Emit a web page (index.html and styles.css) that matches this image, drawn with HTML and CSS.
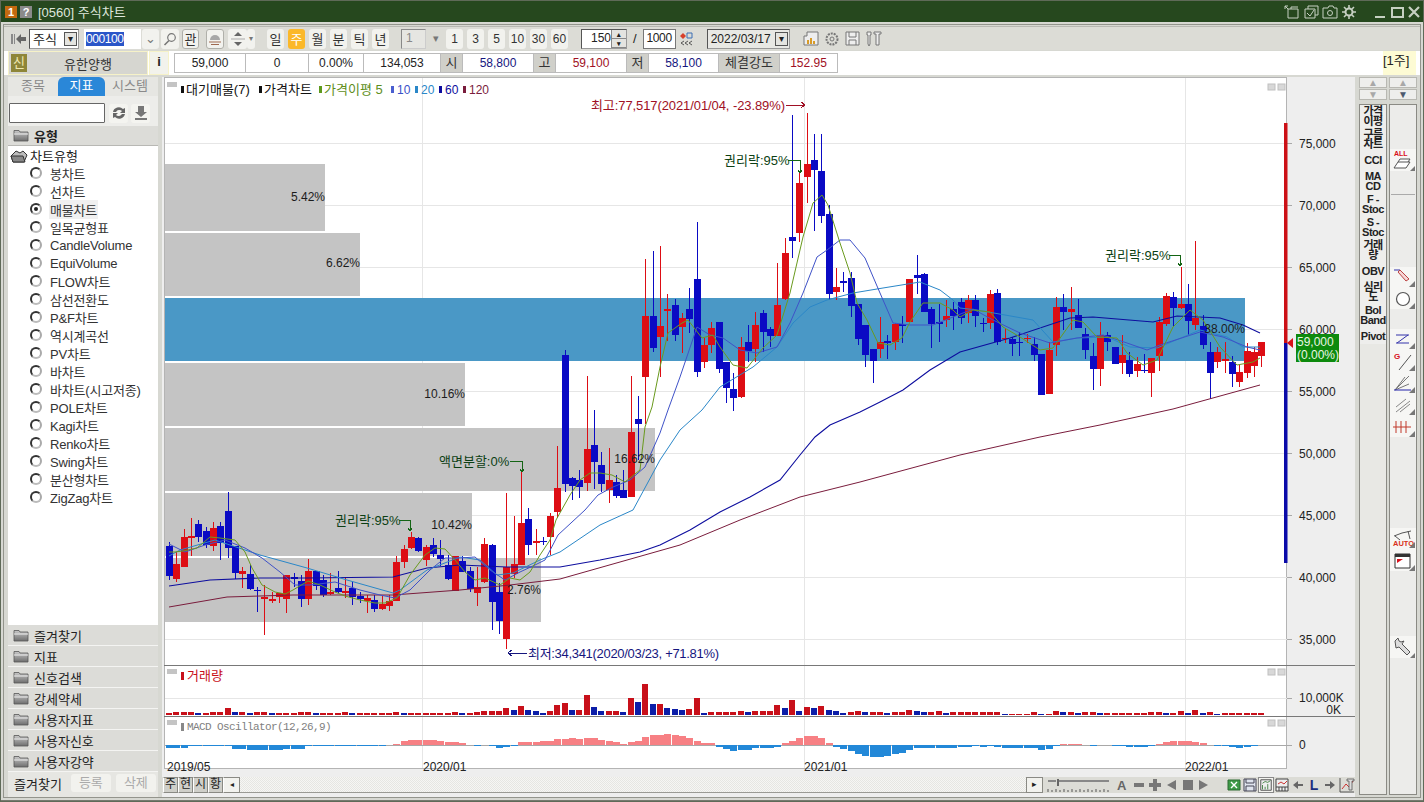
FILE: index.html
```html
<!DOCTYPE html>
<html lang="ko">
<head>
    <meta charset="UTF-8">
    <title>[0560] 주식차트</title>
    <link rel="stylesheet" href="styles.css">
</head>
<body>
    <svg class="defs" width="0" height="0">
        <defs>
            <linearGradient id="folder-grad" x1="0" y1="0" x2="0" y2="1">
                <stop offset="0" stop-color="#c8c8c8"/>
                <stop offset="1" stop-color="#6e6e6e"/>
            </linearGradient>
            <symbol id="folder" viewBox="0 0 16 13">
                <path d="M1 3 L1 1.5 L6 1.5 L7 3 L15 3 L15 12 L1 12 Z" fill="url(#folder-grad)" stroke="#555" stroke-width="0.8"/>
                <path d="M1 5 L15 5" stroke="#eee" stroke-width="1"/>
            </symbol>
            <symbol id="corner" viewBox="0 0 24 20">
                <path d="M24 20v-6l-6 6z" fill="#777"/>
            </symbol>
        </defs>
    </svg>

    <div class="window">
        <header class="titlebar">
            <span class="badge badge-orange">1</span>
            <span class="badge badge-gray">?</span>
            <span class="title-text">[0560] 주식차트</span>
            <div class="title-icons">
                <svg width="16" height="16" viewBox="0 0 16 16"><path d="M4 5h10v9H4zM1 2l3 3M4 2H1v3M7 5V3h7" /></svg>
                <svg width="16" height="16" viewBox="0 0 16 16"><path d="M2 5h10v9H2zM5 5V2h10v9h-3M4 9l3 3 4-6" /></svg>
                <svg width="16" height="16" viewBox="0 0 16 16"><path d="M1 4h5l1-2h4l1 2h3v10H1z" /><circle cx="8" cy="9" r="2.5" /></svg>
                <svg width="16" height="16" viewBox="0 0 16 16"><circle cx="8" cy="8" r="3.5" stroke-width="2" /><path d="M8 1v3M8 12v3M1 8h3M12 8h3M3 3l2 2M11 11l2 2M13 3l-2 2M5 11l-2 2" stroke-width="1.6" /></svg>
                <span class="win-gap"></span>
                <svg width="14" height="16" viewBox="0 0 14 16"><path d="M2 13h10" stroke-width="2" /></svg>
                <svg width="14" height="16" viewBox="0 0 14 16"><path d="M2 4h11v9H2z" stroke-width="2" /></svg>
                <svg width="14" height="16" viewBox="0 0 14 16"><path d="M2 3l10 10M12 3L2 13" stroke-width="2.2" /></svg>
            </div>
        </header>

        <div class="toolbar">
            <svg class="tool-back" width="16" height="14" viewBox="0 0 16 14"><path d="M1 2h2v10H1zM4 2h1v10H4z" fill="#8a8a8a"/><path d="M6 7l5-5v3h5v4h-5v3z" fill="#666"/></svg>
            <div class="select select-market"><span>주식</span><i class="dd-box">▾</i></div>
            <div class="code-input"><span class="selected">000100</span></div>
            <div class="flat-btn dd-small">⌄</div>
            <div class="flat-btn search-btn"><svg width="14" height="14" viewBox="0 0 14 14"><circle cx="8.5" cy="5.5" r="3.8" fill="none" stroke="#777" stroke-width="1.2"/><path d="M6 8.5L1.5 13" stroke="#777" stroke-width="1.6"/></svg></div>
            <div class="flat-btn outlined gwan">관</div>
            <div class="flat-btn outlined bell"><svg width="14" height="14" viewBox="0 0 14 14"><path d="M2 8a5 5 0 0 1 10 0z" fill="#a8a8a8"/><path d="M1 10h12M3 12.5h8" stroke="#a06a50" stroke-width="1.2"/></svg></div>
            <div class="flat-btn spin"><svg width="14" height="16" viewBox="0 0 14 16"><path d="M7 1l4 4H3zM7 15l-4-4h8z" fill="#666"/><path d="M0 8h14" stroke="#aaa"/></svg></div>
            <div class="flat-btn dd-tiny">▾</div>
            <div class="periods">
                <div class="flat-btn">일</div>
                <div class="flat-btn active">주</div>
                <div class="flat-btn">월</div>
                <div class="flat-btn">분</div>
                <div class="flat-btn">틱</div>
                <div class="flat-btn">년</div>
            </div>
            <div class="num-select">1</div>
            <div class="flat-btn dd-num">▾</div>
            <div class="minutes">
                <div class="flat-btn">1</div>
                <div class="flat-btn">3</div>
                <div class="flat-btn">5</div>
                <div class="flat-btn">10</div>
                <div class="flat-btn">30</div>
                <div class="flat-btn">60</div>
            </div>
            <div class="count-input"><span>150</span><i class="spinner"><b>▴</b><b>▾</b></i></div>
            <span class="slash">/</span>
            <div class="total-input">1000</div>
            <svg class="tool-arrows" width="14" height="14" viewBox="0 0 14 14"><path d="M1 4l3-3 3 3-3 3z" fill="#d8402a"/><path d="M8 1h5v5H8z" fill="none" stroke="#3b6fb5"/><path d="M5 9l-3 2 3 2M9 9l-3 2 3 2M13 9l-3 2 3 2" fill="none" stroke="#555"/></svg>
            <div class="date-select"><span>2022/03/17</span><i class="dd-box">▾</i></div>
            <div class="tool-icons">
                <svg width="16" height="16" viewBox="0 0 16 16"><path d="M4 1h11v13H1V5h3z" fill="#eee" stroke="#777"/><path d="M4 13V9h2v4zM7 13V7h2v6zM10 13V10h2v3z" fill="#d89b28"/></svg>
                <svg width="16" height="16" viewBox="0 0 16 16"><circle cx="8" cy="8" r="5.5" fill="none" stroke="#777" stroke-width="2" stroke-dasharray="2 1"/><circle cx="8" cy="8" r="2" fill="none" stroke="#777"/></svg>
                <svg width="16" height="16" viewBox="0 0 16 16"><path d="M1 1h13v13H1z" fill="#eee" stroke="#777"/><path d="M4 1v5h7V1M4 14v-5h7v5" fill="none" stroke="#777"/></svg>
                <svg width="16" height="16" viewBox="0 0 16 16"><path d="M2 1h3v3H4v9l-1 2-1-2V4H1V1zM8 1h7v2h-2v11h-3V3H8z" fill="#eee" stroke="#777"/></svg>
            </div>
        </div>

        <div class="inforow">
            <div class="stock-name">
                <span class="new-badge">신</span>
                <span class="stock-text">유한양행</span>
            </div>
            <div class="info-btn">i</div>
            <div class="quote">
                <div class="cell">59,000</div>
                <div class="cell">0</div>
                <div class="cell">0.00%</div>
                <div class="cell">134,053</div>
                <div class="cell label">시</div>
                <div class="cell navy">58,800</div>
                <div class="cell label">고</div>
                <div class="cell red">59,100</div>
                <div class="cell label">저</div>
                <div class="cell navy">58,100</div>
                <div class="cell label">체결강도</div>
                <div class="cell red">152.95</div>
            </div>
            <div class="unit">[1주]</div>
        </div>

        <div class="main">
            <aside class="sidebar">
                <div class="tabs">
                    <div class="tab">종목</div>
                    <div class="tab active">지표</div>
                    <div class="tab">시스템</div>
                </div>
                <div class="search-row">
                    <div class="search-box"></div>
                    <div class="side-btn"><svg width="16" height="16" viewBox="0 0 16 16"><path d="M2 7a6 6 0 0 1 10-3l2-1v5H9l2-2A4 4 0 0 0 5 7zM14 9a6 6 0 0 1-10 3l-2 1V8h5l-2 2a4 4 0 0 0 6-1z" fill="#666"/></svg></div>
                    <div class="side-btn"><svg width="14" height="16" viewBox="0 0 14 16"><path d="M4 1h6v6h3l-6 5-6-5h3zM1 13h12v2H1z" fill="#777"/></svg></div>
                </div>
                <div class="section open"><svg class="folder-icon" width="16" height="13"><use href="#folder"/></svg><b>유형</b></div>
                <div class="tree">
                    <div class="tree-root">
                        <svg width="18" height="14" viewBox="0 0 18 14"><path d="M1 7l5-5 4 2 3-2 4 4-3 7H3z" fill="#bbb" stroke="#333"/><path d="M1 7h12l2 6H3z" fill="#888" stroke="#333"/></svg>
                        <span>차트유형</span>
                    </div>
                    <ul class="chart-types">
                        <li><i class="radio"></i><span>봉차트</span></li>
                        <li><i class="radio"></i><span>선차트</span></li>
                        <li class="checked"><i class="radio"></i><span>매물차트</span></li>
                        <li><i class="radio"></i><span>일목균형표</span></li>
                        <li><i class="radio"></i><span>CandleVolume</span></li>
                        <li><i class="radio"></i><span>EquiVolume</span></li>
                        <li><i class="radio"></i><span>FLOW차트</span></li>
                        <li><i class="radio"></i><span>삼선전환도</span></li>
                        <li><i class="radio"></i><span>P&amp;F차트</span></li>
                        <li><i class="radio"></i><span>역시계곡선</span></li>
                        <li><i class="radio"></i><span>PV차트</span></li>
                        <li><i class="radio"></i><span>바차트</span></li>
                        <li><i class="radio"></i><span>바차트(시고저종)</span></li>
                        <li><i class="radio"></i><span>POLE차트</span></li>
                        <li><i class="radio"></i><span>Kagi차트</span></li>
                        <li><i class="radio"></i><span>Renko차트</span></li>
                        <li><i class="radio"></i><span>Swing차트</span></li>
                        <li><i class="radio"></i><span>분산형차트</span></li>
                        <li><i class="radio"></i><span>ZigZag차트</span></li>
                    </ul>
                </div>
                <div class="section"><svg class="folder-icon" width="16" height="13"><use href="#folder"/></svg><span>즐겨찾기</span></div>
                <div class="section"><svg class="folder-icon" width="16" height="13"><use href="#folder"/></svg><span>지표</span></div>
                <div class="section"><svg class="folder-icon" width="16" height="13"><use href="#folder"/></svg><span>신호검색</span></div>
                <div class="section"><svg class="folder-icon" width="16" height="13"><use href="#folder"/></svg><span>강세약세</span></div>
                <div class="section"><svg class="folder-icon" width="16" height="13"><use href="#folder"/></svg><span>사용자지표</span></div>
                <div class="section"><svg class="folder-icon" width="16" height="13"><use href="#folder"/></svg><span>사용자신호</span></div>
                <div class="section"><svg class="folder-icon" width="16" height="13"><use href="#folder"/></svg><span>사용자강약</span></div>
                <div class="fav-row">
                    <span class="fav-label">즐겨찾기</span>
                    <div class="fav-btn">등록</div>
                    <div class="fav-btn">삭제</div>
                </div>
            </aside>

            <section class="chart">
                <svg class="plot" width="1193" height="700" viewBox="162 77 1193 700">
                    <rect class="plot-bg" x="164.5" y="77.5" width="1122" height="691"/>

                    <g class="grid">
                        <path d="M165 143H1287M165 205H1287M165 267H1287M165 329H1287M165 391H1287M165 453H1287M165 515H1287M165 577H1287M165 639H1287"/>
                        <path d="M165 698H1287"/>
                        <path d="M422.5 78V768M804.5 78V768M1185.5 78V768"/>
                    </g>

                    <g class="ticks">
                        <path d="M1287 143h5M1287 205h5M1287 267h5M1287 329h5M1287 391h5M1287 453h5M1287 515h5M1287 577h5M1287 639h5M1287 698h5M1287 745h5"/>
                        <path class="zero" d="M165 745.5H1287"/>
                    </g>

                    <g class="profile">
                        <rect x="165" y="164" width="160" height="67"/>
                        <rect x="165" y="233" width="195" height="63"/>
                        <rect class="profile-max" x="165" y="298" width="1080" height="63"/>
                        <rect x="165" y="363" width="300" height="63"/>
                        <rect x="165" y="428" width="490" height="63"/>
                        <rect x="165" y="493" width="307" height="63"/>
                        <rect x="165" y="558" width="376" height="64"/>
                    </g>

                    <g id="candles"></g>
                    <g id="averages"></g>
                    <g id="volume"></g>
                    <g id="macd"></g>

                    <g class="profile-labels">
                        <text x="325" y="201">5.42%</text>
                        <text x="360" y="267">6.62%</text>
                        <text x="1245" y="333">38.00%</text>
                        <text x="465" y="398">10.16%</text>
                        <text x="655" y="463">16.62%</text>
                        <text x="472" y="529">10.42%</text>
                        <text x="541" y="594">2.76%</text>
                    </g>

                    <g class="legend">
                        <rect class="pane-mark" x="167" y="82" width="10" height="5"/>
                        <rect class="pane-mark" x="167" y="669" width="10" height="5"/>
                        <rect class="pane-mark" x="167" y="720" width="10" height="5"/>
                        <rect x="181" y="86" width="3" height="7" fill="#111"/>
                        <text x="186" y="94" fill="#111">대기매물(7)</text>
                        <rect x="259" y="86" width="3" height="7" fill="#111"/>
                        <text x="264" y="94" fill="#111">가격차트</text>
                        <rect x="319" y="86" width="3" height="7" fill="#5e9a1e"/>
                        <text x="324" y="94" fill="#5e8e1a">가격이평 5</text>
                        <rect x="391" y="86" width="3" height="7" fill="#4a5fd0"/>
                        <text class="num" x="397" y="94" fill="#3a50c8">10</text>
                        <rect x="415" y="86" width="3" height="7" fill="#2a87c8"/>
                        <text class="num" x="421" y="94" fill="#2a87c8">20</text>
                        <rect x="439" y="86" width="3" height="7" fill="#0d0d9e"/>
                        <text class="num" x="445" y="94" fill="#0d0d9e">60</text>
                        <rect x="463" y="86" width="3" height="7" fill="#7a1c3c"/>
                        <text class="num" x="469" y="94" fill="#7a1c3c">120</text>
                        <rect x="181" y="672" width="3" height="8" fill="#c8101a"/>
                        <text x="187" y="680" fill="#c8101a">거래량</text>
                        <rect x="181" y="723" width="3" height="8" fill="#888"/>
                        <text class="mono" x="187" y="730" fill="#808080">MACD Oscillator(12,26,9)</text>
                    </g>

                    <g class="notes">
                        <text class="note-red" x="591" y="110" textLength="194">최고:77,517(2021/01/04, -23.89%)</text>
                        <path class="arrow-red" d="M786 105h19M801 102l4 3-4 3"/>
                        <text class="note-navy" x="528" y="658" textLength="191">최저:34,341(2020/03/23, +71.81%)</text>
                        <path class="arrow-navy" d="M508 653h19M512 650l-4 3 4 3"/>
                        <text class="note-green" x="724" y="165">권리락:95%</text>
                        <path class="arrow-green" d="M788 160h12v12M798 170l2 3 2-3"/>
                        <text class="note-green" x="1105" y="260">권리락:95%</text>
                        <path class="arrow-green" d="M1169 255h11v10M1178 263l2 3 2-3"/>
                        <text class="note-green" x="335" y="525">권리락:95%</text>
                        <path class="arrow-green" d="M399 520h11v10M408 528l2 3 2-3"/>
                        <text class="note-green" x="439" y="466">액면분할:0%</text>
                        <path class="arrow-green" d="M510 461h12v10M520 469l2 3 2-3"/>
                    </g>

                    <g class="pane-btns">
                        <rect x="1268" y="84" width="7" height="6"/><rect x="1278" y="84" width="7" height="6"/>
                        <rect x="1268" y="669" width="7" height="6"/><rect x="1278" y="669" width="7" height="6"/>
                        <rect x="1268" y="720" width="7" height="6"/><rect x="1278" y="720" width="7" height="6"/>
                    </g>

                    <rect x="1284" y="123" width="3.5" height="220" fill="#cc1016"/>
                    <rect x="1284" y="343" width="3.5" height="220" fill="#0a0aa8"/>
                    <path d="M1287 343l6-5v10z" fill="#d8101a"/>

                    <path class="pane-line" d="M164 665.5H1355M164 716.5H1355"/>

                    <g class="axis">
                        <text x="1299" y="148">75,000</text>
                        <text x="1299" y="210">70,000</text>
                        <text x="1299" y="272">65,000</text>
                        <text x="1299" y="334">60,000</text>
                        <text x="1299" y="396">55,000</text>
                        <text x="1299" y="458">50,000</text>
                        <text x="1299" y="520">45,000</text>
                        <text x="1299" y="582">40,000</text>
                        <text x="1299" y="644">35,000</text>
                        <text x="1299" y="702">10,000K</text>
                        <text x="1341" y="714" text-anchor="end">0K</text>
                        <text x="1299" y="749">0</text>
                        <text x="167" y="771">2019/05</text>
                        <text x="423" y="771">2020/01</text>
                        <text x="804" y="771">2021/01</text>
                        <text x="1185" y="771">2022/01</text>
                    </g>

                    <rect x="1296" y="334" width="43" height="28" fill="#0d8a0d"/>
                    <text class="price-tag" x="1297" y="346">59,000</text>
                    <text class="price-tag" x="1297" y="359">(0.00%)</text>
                </svg>

                <div class="bottombar">
                    <div class="mini-tabs">
                        <span>주</span><span>현</span><span>시</span><span>황</span><span class="mini-arrow">◂</span>
                    </div>
                    <div class="scroll-track"></div>
                    <div class="scroll-end">▸</div>
                    <svg class="zoom-slider" width="64" height="16" viewBox="0 0 64 16">
                        <path d="M1 4h8M12 4h50" stroke="#888" stroke-width="2"/>
                        <path d="M11 2v7" stroke="#666" stroke-width="2"/>
                        <path d="M1 15V12M5 15V13M9 15V12M13 15V13M17 15V12M21 15V13M25 15V12M29 15V13M33 15V12M37 15V13M41 15V12M45 15V13M49 15V12M53 15V13M57 15V12M61 15V13" stroke="#555"/>
                    </svg>
                    <div class="bar-icons">
                        <span class="bar-a">A</span>
                        <svg width="12" height="14" viewBox="0 0 12 14"><path d="M1 5h10v4H1z" fill="#777"/></svg>
                        <svg width="12" height="14" viewBox="0 0 12 14"><path d="M4 1h4v4h4v4H8v4H4V9H0V5h4z" fill="#777"/></svg>
                        <svg width="12" height="14" viewBox="0 0 12 14"><path d="M11 2v10L2 7z" fill="#777"/></svg>
                        <svg width="12" height="14" viewBox="0 0 12 14"><path d="M2 2h10v10H2z" fill="#777"/></svg>
                        <svg width="12" height="14" viewBox="0 0 12 14"><path d="M2 2v10l9-5z" fill="#777"/></svg>
                    </div>
                    <div class="bar-icons right">
                        <svg width="14" height="14" viewBox="0 0 14 14"><path d="M1 2h12v10H1z" fill="#3d9a46" stroke="#2c6a32"/><path d="M4 4l6 6M10 4l-6 6" stroke="#fff" stroke-width="1.4"/></svg>
                        <svg width="14" height="14" viewBox="0 0 14 14"><path d="M1 1h12v12H1z" fill="#dfe4ee" stroke="#445"/><path d="M3 1v4h8V1M3 13V8h8v5" fill="none" stroke="#445"/></svg>
                        <svg class="pressed" width="14" height="14" viewBox="0 0 16 14"><path d="M2 1h12v12H2z" fill="#eee" stroke="#444"/><path d="M4 12V7M7 12V9M10 12V6M4 5l3-2 3 1 3-2" fill="none" stroke="#3a7a3a"/></svg>
                        <svg width="14" height="14" viewBox="0 0 14 14"><path d="M1 1h12v12H1zM1 9h12M4 9v4M7 9v4M10 9v4" fill="#eee" stroke="#444"/><path d="M3 6l3-2 3 2 3-3" fill="none" stroke="#c33"/></svg>
                        <svg width="14" height="14" viewBox="0 0 12 14"><path d="M1 7l5-4v3h5v2H6v3z" fill="#666"/></svg>
                        <span class="bar-l">L</span>
                        <svg width="14" height="14" viewBox="0 0 12 14"><path d="M11 7L6 3v3H1v2h5v3z" fill="#666"/></svg>
                        <svg width="16" height="16" viewBox="0 0 16 16"><path d="M1 1v14h14" fill="none" stroke="#555"/><path d="M3 12l4-5 3 3 4-6" fill="none" stroke="#c33"/><path d="M8 2h7v2h-2v9h-3V4H8z" fill="#ddd" stroke="#555" stroke-width="0.8"/></svg>
                    </div>
                </div>
            </section>

            <aside class="rail rail-left">
                <div class="rail-spin">
                    <div>▲</div>
                    <div>▼</div>
                </div>
                <div class="rail-body">
                    <div class="rail-list">
                        <div class="ind tight">가격<br>이평</div>
                        <div class="ind tight">구름<br>차트</div>
                        <div class="ind">CCI</div>
                        <div class="ind tight">MA<br>CD</div>
                        <div class="ind tight">F -<br>Stoc</div>
                        <div class="ind tight">S -<br>Stoc</div>
                        <div class="ind tight">거래<br>량</div>
                        <div class="ind">OBV</div>
                        <div class="ind tight">심리<br>도</div>
                        <div class="ind tight">Bol<br>Band</div>
                        <div class="ind">Pivot</div>
                    </div>
                </div>
            </aside>

            <aside class="rail rail-right">
                <div class="rail-spin dark">
                    <div>▲</div>
                    <div>▼</div>
                </div>
                <div class="rail-body tools">
                    <div class="tool-group g-all">
                        <svg width="24" height="22" viewBox="0 0 24 22"><text x="3" y="7" class="tool-word">ALL</text><path d="M3 19l4-6h12l-4 6zM7 13l2-3h10l-2 3" fill="#fff" stroke="#555"/><path d="M24 22v-5l-5 5z" fill="#777"/></svg>
                    </div>
                    <div class="tool-sep"></div>
                    <div class="tool-group g-draw">
                        <svg width="24" height="20" viewBox="0 0 24 20"><path d="M3 3h6" stroke="#3333aa"/><path d="M9 3l9 9-3 2-8-9z" fill="#f6d6d6" stroke="#b44"/><use href="#corner"/></svg>
                        <svg width="24" height="20" viewBox="0 0 24 20"><circle cx="12" cy="10" r="6.5" fill="#fff" stroke="#555" stroke-width="1.2"/><use href="#corner"/></svg>
                    </div>
                    <div class="tool-group g-lines">
                        <svg width="24" height="20" viewBox="0 0 24 20"><path d="M5 6h13M5 14h13M6 14L17 6" fill="none" stroke="#3333aa"/><use href="#corner"/></svg>
                        <svg width="24" height="20" viewBox="0 0 24 20"><text x="3" y="8" class="tool-g">G</text><path d="M8 19L20 4" stroke="#555"/><use href="#corner"/></svg>
                        <svg width="24" height="20" viewBox="0 0 24 20"><path d="M4 17L18 3M4 17l14-6M4 17l10-13" stroke="#777" fill="none"/><path d="M3 17h17" stroke="#2222aa"/><use href="#corner"/></svg>
                        <svg width="24" height="20" viewBox="0 0 24 20"><path d="M5 12l10-8M5 17l14-11M9 17l10-8" stroke="#888" fill="none"/><use href="#corner"/></svg>
                        <svg width="24" height="20" viewBox="0 0 24 20"><path d="M5 4v12M10 4v12M15 4v12M2 10h18" stroke="#c0392b" fill="none"/><use href="#corner"/></svg>
                    </div>
                    <div class="tool-group g-auto">
                        <svg width="24" height="20" viewBox="0 0 24 20"><path d="M3 8l8-3 9-2" stroke="#555" fill="none"/><path d="M4 8l5 4M17 3l2 8" stroke="#555" fill="none"/><text x="2" y="18" class="tool-auto">AUTO</text><use href="#corner"/></svg>
                        <svg width="24" height="20" viewBox="0 0 24 20"><path d="M4 3h15v14H4z" fill="#fff" stroke="#333"/><path d="M4 3h15v3H4z" fill="#333"/><path d="M6 8h6l-6 4z" fill="#d8101a"/><use href="#corner"/></svg>
                    </div>
                    <div class="tool-group g-wrench">
                        <svg width="24" height="22" viewBox="0 0 24 22"><path d="M4 5l3-3 1 3 2 1 3-1-2 3 8 8-3 3-8-8-3 1z" fill="#ddd" stroke="#555"/><path d="M24 22v-5l-5 5z" fill="#777"/></svg>
                    </div>
                </div>
            </aside>
        </div>
    </div>
    <script src="chart.js"></script>
</body>
</html>
```

FILE: styles.css
```css
* {
    box-sizing: border-box;
}

body {
    margin: 0;
    font-family: "Liberation Sans", "Noto Sans CJK KR", sans-serif;
    font-size: 12px;
    color: #222;
    overflow: hidden;
}

.defs {
    position: absolute;
}

.window {
    position: relative;
    width: 1424px;
    height: 802px;
    background-color: #d7d8d2;
    display: flex;
    flex-direction: column;
    border-bottom: 2px solid #77796f;
}

/* window frame lines, laid over the content edge */
.window::before,
.window::after {
    content: "";
    position: absolute;
    pointer-events: none;
}

.window::before {
    inset: 0 0 -2px 0;
    border: 1px solid #5f6a58;
}

.window::after {
    left: 3px;
    right: 3px;
    top: 24px;
    bottom: 2px;
    border: 1px solid #93948c;
}

/* Title bar */
.titlebar {
    height: 22px;
    flex: none;
    background-color: #26481e;
    border-top: 1px solid #4d5f48;
    display: flex;
    align-items: center;
    padding: 0 3px 0 5px;
    color: #dfe6dc;
}

.badge {
    width: 12px;
    height: 12px;
    margin-right: 3px;
    font-size: 11px;
    font-weight: bold;
    line-height: 12px;
    text-align: center;
    color: #fff;
}

.badge-orange {
    background-color: #c46a10;
}

.badge-gray {
    background-color: #8a8a8a;
}

.title-text {
    margin-left: 3px;
    font-size: 13px;
}

.title-icons {
    margin-left: auto;
    display: flex;
    align-items: center;
    gap: 3px;
}

.title-icons svg {
    fill: none;
    stroke: #c6d0c2;
    stroke-width: 1;
}

.win-gap {
    width: 10px;
}

/* Toolbar */
.toolbar {
    height: 24px;
    flex: none;
    margin: 4px 4px 0 4px;
    padding-left: 6px;
    background-color: #dcdcd6;
    border-top: 1px solid #b8b8b2;
    display: flex;
    align-items: center;
}

.tool-back {
    margin-right: 3px;
}

.select {
    width: 50px;
    height: 20px;
    background-color: #fff;
    border: 1px solid #999;
    border-top-color: #555;
    border-left-color: #555;
    display: flex;
    align-items: center;
    justify-content: space-between;
    padding-left: 3px;
    font-size: 13px;
}

.dd-box {
    width: 13px;
    height: 14px;
    margin-right: 1px;
    background-color: #e4e4e0;
    border: 1px solid #555;
    font-style: normal;
    font-size: 10px;
    line-height: 12px;
    text-align: center;
}

.code-input {
    width: 57px;
    height: 20px;
    margin-left: 5px;
    background-color: #fff;
    line-height: 20px;
    padding-left: 2px;
}

.selected {
    background-color: #2a55c8;
    color: #fff;
    letter-spacing: -0.4px;
}

.flat-btn {
    width: 17px;
    height: 20px;
    background-color: #f2f2ee;
    border-radius: 3px;
    display: flex;
    align-items: center;
    justify-content: center;
    font-size: 13px;
    color: #333;
}

.dd-small {
    margin-left: 1px;
    color: #777;
}

.search-btn {
    margin-left: 2px;
    width: 18px;
}

.outlined {
    border: 1px solid #b0b0aa;
}

.gwan {
    margin-left: 3px;
}

.bell {
    margin-left: 7px;
    width: 18px;
}

.spin {
    margin-left: 4px;
    width: 19px;
}

.dd-tiny {
    width: 8px;
    font-size: 8px;
    color: #777;
}

.periods {
    display: flex;
    gap: 4px;
    margin-left: 12px;
}

.periods .flat-btn {
    width: 17px;
}

.periods .active {
    background-color: #fbb829;
    color: #fff;
}

.num-select {
    width: 25px;
    height: 20px;
    margin-left: 12px;
    background-color: #e6e6e2;
    border: 1px solid #888;
    border-right-color: #ccc;
    border-bottom-color: #ccc;
    color: #888;
    padding-left: 4px;
    line-height: 16px;
}

.dd-num {
    width: 13px;
    margin-left: 3px;
    background: none;
    font-size: 11px;
    color: #777;
}

.minutes {
    display: flex;
    gap: 4px;
    margin-left: 4px;
}

.minutes .flat-btn {
    font-size: 12px;
}

.count-input {
    width: 46px;
    height: 20px;
    margin-left: 13px;
    background-color: #fff;
    border: 1px solid #999;
    border-top-color: #555;
    border-left-color: #555;
    display: flex;
    justify-content: space-between;
    padding-left: 9px;
    line-height: 16px;
}

.spinner {
    width: 16px;
    display: flex;
    flex-direction: column;
    background-color: #e4e4e0;
    border-left: 1px solid #888;
    font-style: normal;
    font-size: 7px;
    line-height: 9px;
    text-align: center;
}

.spinner b {
    border-bottom: 1px solid #888;
    height: 9px;
}

.slash {
    margin-left: 6px;
    font-size: 13px;
}

.total-input {
    width: 33px;
    height: 20px;
    margin-left: 6px;
    background-color: #fff;
    border: 1px solid #777;
    line-height: 16px;
    text-align: center;
    letter-spacing: -0.4px;
}

.tool-arrows {
    margin-left: 3px;
}

.date-select {
    width: 83px;
    height: 20px;
    margin-left: 14px;
    background-color: #e8e8e4;
    border: 1px solid #999;
    border-top-color: #555;
    border-left-color: #555;
    display: flex;
    align-items: center;
    justify-content: space-between;
    padding-left: 3px;
}

.tool-icons {
    display: flex;
    gap: 5px;
    margin-left: 13px;
}

/* Quote row */
.inforow {
    height: 24px;
    flex: none;
    margin: 1px 4px 0 4px;
    padding: 0 8px 0 4px;
    background-color: #fff;
    display: flex;
    align-items: stretch;
}

.stock-name {
    width: 140px;
    background-color: #d6d6d0;
    border: 1px solid #f6f2c8;
    display: flex;
    align-items: center;
    padding-left: 2px;
}

.new-badge {
    width: 16px;
    height: 18px;
    background-color: #8e8638;
    color: #efe9b0;
    font-size: 13px;
    line-height: 17px;
    text-align: center;
}

.stock-text {
    margin-left: 37px;
    font-size: 13px;
    color: #333;
}

.info-btn {
    width: 20px;
    margin-left: 1px;
    background-color: #f2f2ec;
    border: 1px solid #f6f2c8;
    font-weight: bold;
    font-size: 13px;
    text-align: center;
    line-height: 20px;
}

.quote {
    display: grid;
    grid-template-columns: 71px 63px 55px 77px 22px 71px 22px 71px 22px 70px 61px 59px;
    margin-left: 5px;
    height: 20px;
    margin-top: 2px;
    border: 1px solid #bbb;
    border-left: none;
    border-right: none;
}

.cell {
    border-left: 1px solid #bbb;
    text-align: center;
    line-height: 18px;
}

.cell:last-child {
    border-right: 1px solid #bbb;
}

.cell.label {
    background-color: #d0d0ca;
    color: #333;
    font-size: 13px;
}

.cell.navy {
    color: #16167e;
}

.cell.red {
    color: #a01024;
}

.unit {
    margin-left: auto;
    width: 33px;
    margin-right: -4px;
    background-color: #fdfbd4;
    font-size: 13px;
    line-height: 20px;
    white-space: nowrap;
}

/* Main area */
.main {
    height: 720px;
    flex: none;
    margin: 2px 7px 0 8px;
    display: flex;
    align-items: stretch;
}

/* Left panel */
.sidebar {
    width: 150px;
    flex: none;
    display: flex;
    flex-direction: column;
    background-color: #e6e6e2;
}

.tabs {
    height: 19px;
    flex: none;
    display: flex;
    background-color: #e6e6e2;
    color: #8a8a8a;
    font-size: 13px;
}

.tab {
    width: 50px;
    text-align: center;
    line-height: 18px;
}

.tab.active {
    width: 47px;
    background-color: #2a87d8;
    border-radius: 6px 6px 0 0;
    color: #fff;
}

.search-row {
    height: 30px;
    flex: none;
    display: flex;
    align-items: center;
    padding: 4px 0 0 1px;
    gap: 3px;
    background-color: #ededea;
}

.search-box {
    width: 96px;
    height: 20px;
    background-color: #fff;
    border: 1px solid #666;
    border-radius: 1px;
    margin-right: 1px;
}

.side-btn {
    width: 19px;
    height: 19px;
    background-color: #f4f4f0;
    border-radius: 3px;
    display: flex;
    align-items: center;
    justify-content: center;
}

.section {
    height: 21px;
    flex: none;
    display: flex;
    align-items: center;
    padding-left: 5px;
    background-color: #dcdcd8;
    border-bottom: 1px solid #f4f4f2;
    font-size: 13px;
}

.section.open {
    height: 20px;
    border-bottom: 1px solid #b8b8b4;
}

.section b {
    margin-left: 5px;
    font-size: 13px;
}

.section span {
    margin-left: 5px;
}

.folder-icon {
    flex: none;
}

.tree {
    height: 479px;
    flex: none;
    background-color: #fff;
    padding-top: 1px;
}

.tree-root {
    height: 17px;
    display: flex;
    align-items: center;
    font-size: 13px;
}

.tree-root svg {
    margin-left: 2px;
}

.tree-root span {
    margin-left: 2px;
}

.chart-types {
    list-style: none;
    margin: 0;
    padding: 0;
}

.chart-types li {
    height: 18px;
    display: flex;
    align-items: center;
    padding-left: 22px;
    font-size: 13px;
    color: #333;
}

.chart-types span {
    margin-left: 7px;
    padding: 0 1px;
    letter-spacing: -0.2px;
}

.chart-types .checked span {
    background-color: #f0f0f0;
}

.radio {
    width: 12px;
    height: 12px;
    border-radius: 50%;
    border: 2px solid #333;
    border-right-color: #aaa;
    border-bottom-color: #bbb;
    background-color: #fff;
    display: block;
    position: relative;
}

.checked .radio::after {
    content: "";
    position: absolute;
    left: 2px;
    top: 2px;
    width: 4px;
    height: 4px;
    border-radius: 50%;
    background-color: #222;
}

.fav-row {
    flex: 1;
    display: flex;
    align-items: center;
    background-color: #e6e6e2;
    font-size: 13px;
    padding-bottom: 3px;
}

.fav-label {
    margin-left: 6px;
}

.fav-btn {
    width: 40px;
    height: 18px;
    margin-left: 9px;
    background-color: #f2f2ee;
    border-radius: 3px;
    color: #aaa;
    text-align: center;
    line-height: 17px;
}

.fav-btn:last-child {
    margin-left: 5px;
}

/* Chart */
.chart {
    width: 1193px;
    flex: none;
    margin-left: 4px;
    background-color: #eeeeee;
    display: flex;
    flex-direction: column;
}

.plot {
    display: block;
    flex: none;
    font-family: "Liberation Sans", "Noto Sans CJK KR", sans-serif;
}

.plot-bg {
    fill: #fff;
    stroke: #b4b4b4;
}

.grid path {
    fill: none;
    stroke: #e6e6e6;
    shape-rendering: crispEdges;
}

.ticks path {
    fill: none;
    stroke: #a8a8a8;
    shape-rendering: crispEdges;
}

.profile rect {
    fill: #c4c4c4;
}

.profile .profile-max {
    fill: #4a98c6;
}

.profile-labels text {
    font-size: 12px;
    text-anchor: end;
    fill: #1c1c1c;
}

.legend text {
    font-size: 13px;
}

.legend .num {
    font-size: 12px;
}

.legend .mono {
    font-family: "Liberation Mono", monospace;
    font-size: 11px;
    letter-spacing: -0.6px;
}

.pane-mark {
    fill: #c4c4c4;
}

.notes text {
    font-size: 13px;
}

.note-red {
    fill: #a01024;
}

.note-navy {
    fill: #16167e;
}

.note-green {
    fill: #0c3f14;
}

.arrow-red,
.arrow-navy,
.arrow-green {
    fill: none;
    stroke-width: 1;
    shape-rendering: crispEdges;
}

.arrow-red {
    stroke: #a01024;
}

.arrow-navy {
    stroke: #16167e;
}

.arrow-green {
    stroke: #146414;
}

.pane-btns rect {
    fill: #d8d8d8;
    stroke: #c0c0c0;
}

.pane-line {
    fill: none;
    stroke: #787878;
    shape-rendering: crispEdges;
}

.axis text {
    font-size: 12px;
    fill: #222;
}

.price-tag {
    font-size: 12px;
    fill: #eaf5e4;
}

/* Bottom controls */
.bottombar {
    height: 16px;
    flex: none;
    display: flex;
    align-items: center;
    background-color: #dcdcd6;
}

.mini-tabs {
    display: flex;
    flex: none;
    margin-left: 1px;
    height: 16px;
    font-size: 12px;
}

.mini-tabs span {
    width: 15px;
    background-color: #cfcfc9;
    border: 1px solid #8a8a84;
    border-left-color: #fff;
    text-align: center;
    line-height: 13px;
}

.mini-tabs .mini-arrow {
    width: 17px;
    background-color: #f2f2ee;
    font-size: 8px;
}

.scroll-track {
    width: 786px;
    height: 16px;
    flex: none;
    background: repeating-conic-gradient(#e6e6e2 0 25%, #f6f6f4 0 50%) 0 0 / 2px 2px;
    border-bottom: 1px solid #9a9a94;
}

.scroll-end {
    width: 17px;
    height: 16px;
    flex: none;
    background-color: #f2f2ee;
    border: 1px solid #8a8a84;
    font-size: 9px;
    text-align: center;
    line-height: 13px;
}

.zoom-slider {
    margin-left: 4px;
    flex: none;
}

.bar-icons {
    display: flex;
    align-items: center;
    gap: 4px;
    margin-left: 6px;
}

.bar-icons.right {
    margin-left: 18px;
    gap: 2px;
}

.bar-a {
    width: 12px;
    font-weight: bold;
    color: #666;
    font-size: 13px;
}

.bar-l {
    width: 14px;
    font-weight: bold;
    color: #1a2f80;
    font-size: 14px;
    text-align: center;
}

.pressed {
    background-color: #f4f4f0;
    outline: 1px solid #888;
}

/* Right rails */
.rail {
    width: 28px;
    flex: none;
    display: flex;
    flex-direction: column;
    margin-left: 4px;
}

.rail-right {
    margin-left: 2px;
}

.rail-spin {
    height: 23px;
    flex: none;
    display: flex;
    flex-direction: column;
    gap: 1px;
    font-size: 10px;
    color: #a8a8a8;
    text-align: center;
}

.rail-spin div {
    height: 11px;
    background-color: #eeeeec;
    border: 1px solid #b8b8b2;
    line-height: 9px;
}

.rail-spin.dark div:last-child {
    color: #4d5a6e;
}

.rail-body {
    height: 691px;
    flex: none;
    margin-top: 4px;
    background-color: #e8e8e4;
    border: 1px solid #8a8a84;
    display: flex;
    flex-direction: column;
}

.rail-list {
    background-color: #eeeeec;
    padding-top: 1px;
    height: 239px;
    display: flex;
    flex-direction: column;
    justify-content: space-between;
}

.ind {
    text-align: center;
    font-size: 11px;
    font-weight: bold;
    color: #222;
    letter-spacing: -0.5px;
    line-height: 16px;
}

.ind.tight {
    line-height: 10px;
}

.tools {
    background-color: #ececea;
    align-items: center;
}

.tool-group {
    width: 26px;
    flex: none;
    background-color: #f6f6f4;
    display: flex;
    flex-direction: column;
    align-items: center;
}

.g-all {
    margin-top: 44px;
}

.tool-sep {
    width: 24px;
    height: 1px;
    margin-top: 23px;
    background-color: #aaa;
    flex: none;
}

.g-draw {
    margin-top: 72px;
    gap: 2px;
}

.g-lines {
    margin-top: 20px;
    gap: 2px;
}

.g-auto {
    margin-top: 91px;
    gap: 3px;
}

.g-wrench {
    margin-top: 65px;
}

.tool-word {
    font-size: 7px;
    font-weight: bold;
    fill: #d8101a;
}

.tool-g {
    font-size: 8px;
    font-weight: bold;
    fill: #d8101a;
}

.tool-auto {
    font-size: 7.5px;
    font-weight: bold;
    fill: #d8301a;
}

/* Chart marks, drawn in chart.js */
.wick {
    stroke-width: 1;
    shape-rendering: crispEdges;
}

.up {
    fill: #dd0d14;
    stroke: #dd0d14;
}

.down {
    fill: #0a0ac4;
    stroke: #0a0ac4;
}

.body {
    stroke: none;
    shape-rendering: crispEdges;
}

.ma {
    fill: none;
    stroke-width: 1;
}

.ma5 {
    stroke: #6a9a1e;
}

.ma10 {
    stroke: #3f52c8;
}

.ma20 {
    stroke: #2a87c8;
}

.ma60 {
    stroke: #0d0d9e;
    stroke-width: 1.1;
}

.ma120 {
    stroke: #7a1c3c;
}

.vol-up {
    fill: #c8101a;
    shape-rendering: crispEdges;
}

.vol-down {
    fill: #0c1ea8;
    shape-rendering: crispEdges;
}

.osc-up {
    fill: #f78084;
    shape-rendering: crispEdges;
}

.osc-down {
    fill: #2288d8;
    shape-rendering: crispEdges;
}
```

FILE: chart.js
```js
const SVG_NS = 'http://www.w3.org/2000/svg';
const START_X = 169;
const STEP = 7.33;
const BAR_W = 6;
const VOL_BASE = 715;
const OSC_BASE = 745;

// dir (1 up, 0 down), wick top, body top, body bottom, wick bottom (all in chart y)
const candles = [
    [0,542,546,576,580],[1,552,564,579,582],[1,529,537,567,567],[1,518,536,538,556],[0,520,524,537,542],
    [0,527,531,545,548],[1,522,528,546,551],[0,522,526,543,560],[0,492,511,548,558],[0,546,546,573,579],
    [1,567,571,574,588],[0,565,574,589,590],[0,587,590,591,612],[1,585,597,599,635],[1,592,599,601,603],
    [1,593,593,597,603],[1,575,575,599,613],[0,573,577,579,587],[0,575,581,599,607],[1,559,571,599,605],
    [0,571,571,586,590],[0,575,580,595,597],[1,573,592,594,595],[0,571,588,592,593],[1,577,591,593,598],
    [0,582,588,597,605],[0,592,596,599,603],[1,595,598,601,613],[0,595,600,609,612],[1,595,604,609,610],
    [1,595,601,606,611],[1,556,562,601,601],[1,545,549,562,568],[1,532,537,548,549],[0,537,538,551,552],
    [1,545,547,560,566],[0,538,545,554,557],[0,540,555,559,566],[0,555,565,579,580],[1,556,556,591,591],
    [0,556,561,572,572],[0,567,571,589,592],[1,567,587,593,606],[1,538,544,582,583],[0,544,545,602,630],
    [0,583,592,621,634],[1,493,567,639,649],[1,516,564,574,578],[1,472,523,565,565],[0,508,519,545,555],
    [1,529,541,543,555],[0,537,541,542,545],[1,513,516,537,555],[1,446,488,512,518],[0,350,355,484,492],
    [0,477,478,486,500],[0,470,480,487,498],[1,376,449,483,491],[0,410,445,462,489],[0,452,465,484,492],
    [1,448,480,490,503],[0,475,482,496,498],[0,470,490,498,498],[1,376,432,497,497],[0,396,419,424,460],
    [1,259,316,377,424],[0,251,316,348,352],[1,246,326,337,377],[1,294,309,311,341],[0,299,305,335,341],
    [1,313,318,327,353],[0,288,309,319,333],[0,222,279,372,377],[1,338,345,362,368],[1,322,328,345,353],
    [0,322,322,369,373],[0,362,362,388,403],[0,373,389,398,411],[1,337,347,397,398],[0,325,342,351,362],
    [1,312,325,349,362],[0,310,313,332,352],[0,327,329,336,347],[1,263,305,336,336],[1,238,253,299,300],
    [0,115,237,241,258],[1,173,183,233,242],[1,113,164,177,203],[0,134,160,170,231],[0,134,171,216,223],
    [0,205,214,294,300],[1,268,287,292,300],[0,272,281,283,292],[0,272,278,306,317],[0,304,304,339,345],
    [0,325,325,355,367],[0,349,349,361,383],[1,317,342,349,358],[0,335,341,343,359],[1,323,324,342,350],
    [0,316,324,326,343],[1,279,279,322,322],[0,255,275,278,294],[0,273,274,312,312],[0,307,309,324,348],
    [0,304,322,324,342],[1,300,316,320,327],[0,302,309,316,330],[0,298,302,318,324],[1,295,300,313,323],
    [0,295,300,316,327],[0,318,323,324,332],[1,290,294,323,329],[0,289,293,342,345],[1,328,338,339,343],
    [0,337,339,344,356],[0,332,342,343,356],[1,334,338,339,343],[0,337,344,355,361],[0,354,354,395,395],
    [1,342,350,394,394],[1,297,307,345,356],[0,294,307,312,330],[1,287,309,312,330],[0,299,315,328,328],
    [0,328,334,350,359],[0,343,356,369,390],[1,322,335,369,386],[0,332,335,342,351],[0,347,347,364,364],
    [1,335,355,363,374],[0,352,360,374,377],[1,357,364,371,377],[0,354,370,371,373],[1,358,358,373,397],
    [1,317,322,356,371],[1,293,296,324,326],[0,292,297,308,327],[1,267,304,308,309],[0,284,304,321,335],
    [1,241,318,325,330],[0,315,326,345,349],[0,342,352,373,399],[1,347,352,362,368],[1,342,359,361,373],
    [0,356,362,374,387],[1,365,372,382,387],[1,343,351,373,378],[1,347,352,366,377],[1,342,342,356,367]
];

const averages = {
    ma120: '169,607 227,597 293,595 393,595 460,590 510,585 560,579 620,562 680,545 740,520 800,497 860,482 960,455 1040,437 1100,425 1173,409 1260,385',
    ma60: '169,586 210,580 260,578 307,578 393,577 427,568 460,565 507,567 560,567 600,560 640,552 660,545 690,530 720,512 750,497 780,480 800,455 815,437 830,425 860,412 880,402 903,390 930,370 960,352 1010,338 1070,318 1093,317 1153,322 1177,316 1220,318 1243,325 1260,333',
    ma20: '169,556 180,550 215,540 260,555 307,568 347,580 393,593 400,590 427,570 460,557 480,560 497,575 513,573 540,560 560,552 600,525 633,510 660,460 680,430 702,410 720,387 753,367 777,347 793,323 810,307 827,300 853,293 883,288 920,282 940,290 953,300 960,308 977,310 1033,320 1053,342 1077,338 1107,337 1130,347 1157,348 1200,330 1227,337 1243,347 1260,347',
    ma10: '169,544 185,552 205,545 225,540 245,548 262,558 280,572 295,585 310,585 335,582 360,590 380,595 395,598 410,590 430,570 445,558 460,558 475,557 490,570 505,580 520,572 535,565 545,560 558,535 585,510 598,495 613,487 630,480 645,467 660,433 668,410 680,377 697,327 710,335 723,338 740,350 757,353 777,347 790,323 803,293 817,257 827,250 840,240 850,240 865,258 880,293 893,323 910,325 933,325 953,317 973,309 993,320 1020,333 1050,343 1077,338 1103,335 1127,343 1147,350 1160,345 1200,332 1223,337 1247,347 1260,350',
    ma5: '169,552 175,552 183,551 197,548 210,537 220,538 235,540 245,552 252,568 262,585 275,592 285,594 293,590 308,581 320,585 335,592 345,596 360,600 375,603 385,603 397,598 410,575 425,555 435,548 445,549 455,560 465,572 475,580 485,578 500,585 510,578 520,580 530,572 540,555 550,540 556,520 570,495 580,480 590,473 600,473 612,475 625,482 640,470 645,427 652,407 660,367 668,333 682,323 688,320 702,338 713,335 720,347 733,365 747,368 763,348 777,335 790,293 803,237 813,203 822,195 828,205 840,243 850,273 857,303 867,320 878,343 890,345 902,338 910,322 923,303 940,303 953,310 960,317 973,310 990,312 1003,327 1020,337 1040,350 1053,348 1073,320 1083,322 1097,337 1117,338 1127,353 1143,365 1157,360 1173,327 1190,310 1203,320 1220,347 1237,365 1253,362 1260,358'
};

// volume bar heights in px, one per candle
const volume = [
    2,3,3,3,2,2,3,3,7,3,3,2,3,3,2,2,2,2,3,3,2,2,2,2,3,2,2,2,2,2,2,3,
    2,2,2,2,2,2,2,3,2,2,3,4,4,4,7,5,9,5,4,2,4,10,12,5,5,20,8,4,4,4,3,17,13,31,11,11,7,6,5,6,17,
    2,3,3,3,3,4,3,4,4,4,10,7,15,4,8,7,9,5,4,2,3,4,3,3,3,2,3,3,5,4,3,3,4,2,3,3,3,3,3,3,3,
    1,1,1,1,3,1,1,4,3,3,2,3,3,2,2,2,2,2,2,2,3,3,2,2,4,2,5,2,3,1,2,2,2,2,2,2
];

// macd oscillator, + above the zero line, - below
const oscillator = [
    -3,-3,-3,-1,-1,-1,-1,-1,-1,-4,-4,-5,-5,-5,-5,-5,-4,-4,-4,-1,-1,-1,-1,-1,-1,-1,-1,-1,-1,-1,0,1,
    4,5,5,5,5,4,3,3,2,0,-1,0,-1,-3,-2,-1,3,3,3,4,4,6,6,7,6,7,7,5,4,3,1,3,4,8,10,10,11,10,9,7,4,2,2,
    -2,-4,-6,-5,-5,-3,-3,-3,-2,2,4,7,9,9,7,2,-2,-4,-6,-9,-11,-12,-12,-11,-9,-8,-5,-3,-3,-3,-3,-3,-3,-2,-2,-1,-2,-1,-2,
    -3,-3,-3,-3,-3,-5,-4,-1,1,1,1,0,-1,0,0,-1,-1,-2,-2,-2,-1,1,3,4,4,4,3,2,0,-1,-1,-2,-3,-2,-1,0
];

function el(name, attrs, parent) {
    const node = document.createElementNS(SVG_NS, name);
    Object.keys(attrs).forEach(key => node.setAttribute(key, attrs[key]));
    parent.appendChild(node);
    return node;
}

function barX(i) {
    return Math.round(START_X + STEP * i);
}

function drawCandles() {
    const group = document.getElementById('candles');
    candles.forEach((c, i) => {
        const x = barX(i);
        const dir = c[0] ? 'up' : 'down';
        el('line', { class: 'wick ' + dir, x1: x + 0.5, x2: x + 0.5, y1: c[1], y2: c[4] }, group);
        el('rect', { class: 'body ' + dir, x: x - 3, y: c[2], width: BAR_W + 1, height: Math.max(c[3] - c[2], 1) }, group);
    });
}

function drawAverages() {
    const group = document.getElementById('averages');
    Object.keys(averages).forEach(name => {
        el('polyline', { class: 'ma ' + name, points: averages[name] }, group);
    });
}

function drawVolume() {
    const group = document.getElementById('volume');
    volume.forEach((h, i) => {
        const rising = i === 0 || h >= volume[i - 1];
        el('rect', { class: rising ? 'vol-up' : 'vol-down', x: barX(i) - 3, y: VOL_BASE - h, width: BAR_W, height: h }, group);
    });
}

function drawOscillator() {
    const group = document.getElementById('macd');
    oscillator.forEach((v, i) => {
        if (v === 0) return;
        const h = Math.abs(v);
        const y = v > 0 ? OSC_BASE - h : OSC_BASE;
        el('rect', { class: v > 0 ? 'osc-up' : 'osc-down', x: barX(i) - 3, y: y, width: BAR_W + 1, height: h }, group);
    });
}

drawCandles();
drawAverages();
drawVolume();
drawOscillator();
```
